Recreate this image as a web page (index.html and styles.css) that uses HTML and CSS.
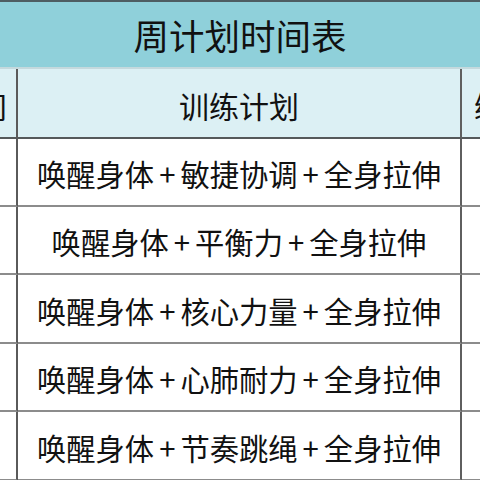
FILE: index.html
```html
<!DOCTYPE html>
<html lang="zh-CN">
<head>
<meta charset="utf-8">
<title>周计划时间表</title>
<link rel="stylesheet" href="styles.css">
</head>
<body>
<div class="sheet">
  <div class="title">周计划时间表</div>
  <div class="grid">
    <div class="cell head side-left">时间</div>
    <div class="cell head mid">训练计划</div>
    <div class="cell head side-right">练习时长</div>

    <div class="cell side-left"></div>
    <div class="cell mid">唤醒身体<span class="plus">+</span>敏捷协调<span class="plus">+</span>全身拉伸</div>
    <div class="cell side-right"></div>

    <div class="cell side-left"></div>
    <div class="cell mid">唤醒身体<span class="plus">+</span>平衡力<span class="plus">+</span>全身拉伸</div>
    <div class="cell side-right"></div>

    <div class="cell side-left"></div>
    <div class="cell mid">唤醒身体<span class="plus">+</span>核心力量<span class="plus">+</span>全身拉伸</div>
    <div class="cell side-right"></div>

    <div class="cell side-left"></div>
    <div class="cell mid">唤醒身体<span class="plus">+</span>心肺耐力<span class="plus">+</span>全身拉伸</div>
    <div class="cell side-right"></div>

    <div class="cell side-left"></div>
    <div class="cell mid">唤醒身体<span class="plus">+</span>节奏跳绳<span class="plus">+</span>全身拉伸</div>
    <div class="cell side-right"></div>
  </div>
</div>
</body>
</html>
```

FILE: styles.css
```css
html, body {
  margin: 0;
  padding: 0;
  background: #ffffff;
}

.sheet {
  width: 480px;
  height: 480px;
  overflow: hidden;
  background: #ffffff;
  font-family: "Noto Sans CJK SC", "Noto Sans", sans-serif;
  color: #111111;
}

.title {
  box-sizing: border-box;
  height: 69px;
  border-top: 2px solid #4e5d62;
  border-bottom: 2px solid #c4d9dd;
  background: #8fd0da;
  display: flex;
  align-items: center;
  justify-content: center;
  font-size: 35.5px;
  line-height: 1;
  padding-top: 1px;
}

.grid {
  display: grid;
  grid-template-columns: 102px 444px 100px;
  grid-template-rows: 70px 68px 68px 69px 68px 69px;
  margin-left: -84px;
}

.cell {
  box-sizing: border-box;
  display: flex;
  align-items: center;
  border-bottom: 2px solid #8c8c8c;
  font-size: 29.3px;
  line-height: 1;
  padding-top: 4px;
  white-space: nowrap;
  overflow: hidden;
}

.head {
  background: #dcf0f4;
  border-bottom-color: #55595a;
  font-size: 30px;
}

.plus {
  margin: 0 5px;
}

.side-left {
  border-right: 2px solid #5a5a5a;
  justify-content: flex-end;
  padding-right: 9px;
}

.mid {
  border-right: 2px solid #5f5f5f;
  justify-content: center;
}

.side-right {
  justify-content: flex-start;
  padding-left: 12px;
}
```
